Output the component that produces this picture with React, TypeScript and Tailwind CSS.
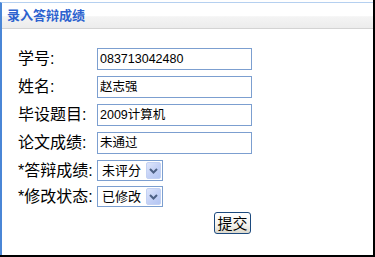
import React from "react";

const cjk = { fontFamily: '"Liberation Sans", "Noto Sans CJK SC", sans-serif' };

function Field({ label, value }: { label: string; value: string }) {
  return (
    <div className="flex items-center h-[22px]">
      <div className="w-[79px] text-[16px] leading-none text-black whitespace-nowrap">{label}</div>
      <div className="w-[155px] h-[22px] border border-[#7c9fd0] bg-white flex items-center pl-[2px] text-[12.5px] text-black leading-none">
        {value}
      </div>
    </div>
  );
}

function SelectField({ label, value }: { label: string; value: string }) {
  return (
    <div className="flex items-center h-[21px]">
      <div className="w-[79px] text-[16px] leading-none text-black whitespace-nowrap">{label}</div>
      <div className="w-[66px] h-[21px] border border-[#7c9fd0] bg-white flex items-center justify-between pl-[4px] pr-[1px]">
        <span className="text-[13px] leading-none text-black">{value}</span>
        <div className="w-[15px] h-[17px] rounded-[2px] border border-[#c3d1f3] bg-[linear-gradient(135deg,#dfe6fb_0%,#c5d2f6_50%,#b4c6f3_100%)] flex items-center justify-center">
          <svg width="9" height="6" viewBox="0 0 9 6">
            <path d="M1 1 L4.5 4.5 L8 1" stroke="#4d6185" strokeWidth="2" fill="none" />
          </svg>
        </div>
      </div>
    </div>
  );
}

export default function App() {
  return (
    <div className="w-[375px] h-[257px] bg-white" style={cjk}>
      <div className="w-full h-full border-r-[2px] border-b-[2px] border-black flex flex-col">
        <div className="flex-1 mt-[2px] border-t border-t-[#b5d0f0] border-l-[2px] border-l-[#4a86d6] flex flex-col">
          <div className="h-[26px] border-b border-b-[#d3d3d3] bg-[linear-gradient(to_bottom,#ffffff_0%,#ffffff_50%,#f4f4f4_55%,#ececec_100%)] flex items-center pl-[5px]">
            <span className="text-[13px] font-bold text-[#2d62cf] leading-none">录入答辩成绩</span>
          </div>
          <div className="pl-[16px] pt-[19px] flex flex-col">
            <div className="flex flex-col gap-[6px]">
              <Field label="学号:" value="083713042480" />
              <Field label="姓名:" value="赵志强" />
              <Field label="毕设题目:" value="2009计算机" />
              <Field label="论文成绩:" value="未通过" />
            </div>
            <div className="flex flex-col gap-[5px] mt-[6px]">
              <SelectField label="*答辩成绩:" value="未评分" />
              <SelectField label="*修改状态:" value="已修改" />
            </div>
            <div className="mt-[5px] ml-[196px]">
              <button className="w-[37px] h-[22px] rounded-[3px] border border-[#1c4a7e] bg-[linear-gradient(to_bottom,#ffffff_0%,#f4f3ee_60%,#dcd9cd_100%)] text-[15px] leading-none text-black flex items-center justify-center">
                提交
              </button>
            </div>
          </div>
        </div>
      </div>
    </div>
  );
}
